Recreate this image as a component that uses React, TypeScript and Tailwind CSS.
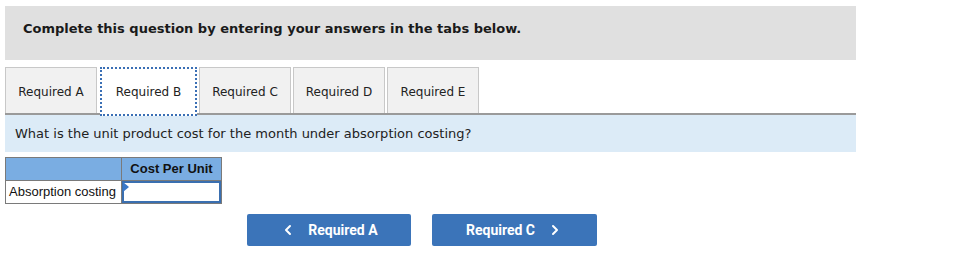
import { ChevronLeft, ChevronRight } from "lucide-react";

const tabs = ["Required A", "Required B", "Required C", "Required D", "Required E"];

export default function App() {
	const active = 1;

	return (
		<div className="w-[953px] h-[263px] bg-white pt-[6px] pl-[5px]">
			{/* Instructions banner */}
			<div className="w-[851px] h-[54px] bg-[#e0e0e0] flex items-center pl-[18px] pb-[9px]">
				<p className="text-[13px] font-bold text-[#1a1a1a] font-['DejaVu_Sans',Verdana,sans-serif]">
					Complete this question by entering your answers in the tabs below.
				</p>
			</div>

			{/* Tabs */}
			<div className="mt-[7px] w-[851px] flex items-end gap-[2px] border-b-2 border-[#9a9a9a] font-['DejaVu_Sans',Verdana,sans-serif]">
				{tabs.map((t, i) =>
					i === active ? (
						<div
							key={t}
							className="w-[97px] h-[49px] -mb-[3px] ml-[1px] bg-white border-2 border-dotted border-[#3a6fb5] flex items-center justify-center text-[12px] text-[#222]"
						>
							{t}
						</div>
					) : (
						<div
							key={t}
							className="w-[92px] h-[46px] bg-[#f1f1f1] border border-b-0 border-[#c8c8c8] flex items-center justify-center pt-[2px] text-[12px] text-[#222]"
						>
							{t}
						</div>
					)
				)}
			</div>

			{/* Question */}
			<div className="w-[851px] h-[37px] bg-[#dcebf7] flex items-center pl-[10px] pt-[1px]">
				<p className="text-[13px] text-[#222] font-['DejaVu_Sans',Verdana,sans-serif]">
					What is the unit product cost for the month under absorption costing?
				</p>
			</div>

			{/* Answer table */}
			<table className="mt-[5px] border-collapse font-['Liberation_Sans',Arial,sans-serif] text-[13px] text-[#111]">
				<tbody>
					<tr className="h-[23px] bg-[#7aade2]">
						<td className="w-[116px] border border-[#7a7a7a]"></td>
						<td className="w-[100px] border border-[#7a7a7a] text-center font-bold">Cost Per Unit</td>
					</tr>
					<tr className="h-[23px]">
						<td className="border border-[#7a7a7a] px-[3px] whitespace-nowrap">Absorption costing</td>
						<td className="border border-[#7a7a7a] p-0">
							<div className="relative h-[22px] border-2 border-[#3a6fb0] bg-white">
								<div className="absolute -left-[1px] -top-[1px] w-0 h-0 border-t-[5px] border-t-transparent border-b-[5px] border-b-transparent border-l-[6px] border-l-[#3a78c8]" />
							</div>
						</td>
					</tr>
				</tbody>
			</table>

			{/* Navigation */}
			<div className="mt-[10px] ml-[242px] flex gap-[21px] font-['Roboto',Arial,sans-serif] text-[14px] font-bold text-white">
				<button className="w-[164px] h-[32px] rounded-[2px] bg-[#3b74b9] flex items-center justify-center gap-[12px]">
					<ChevronLeft size={16} strokeWidth={3} />
					<span>Required A</span>
				</button>
				<button className="w-[165px] h-[32px] rounded-[2px] bg-[#3b74b9] flex items-center justify-center gap-[12px]">
					<span>Required C</span>
					<ChevronRight size={16} strokeWidth={3} />
				</button>
			</div>
		</div>
	);
}
